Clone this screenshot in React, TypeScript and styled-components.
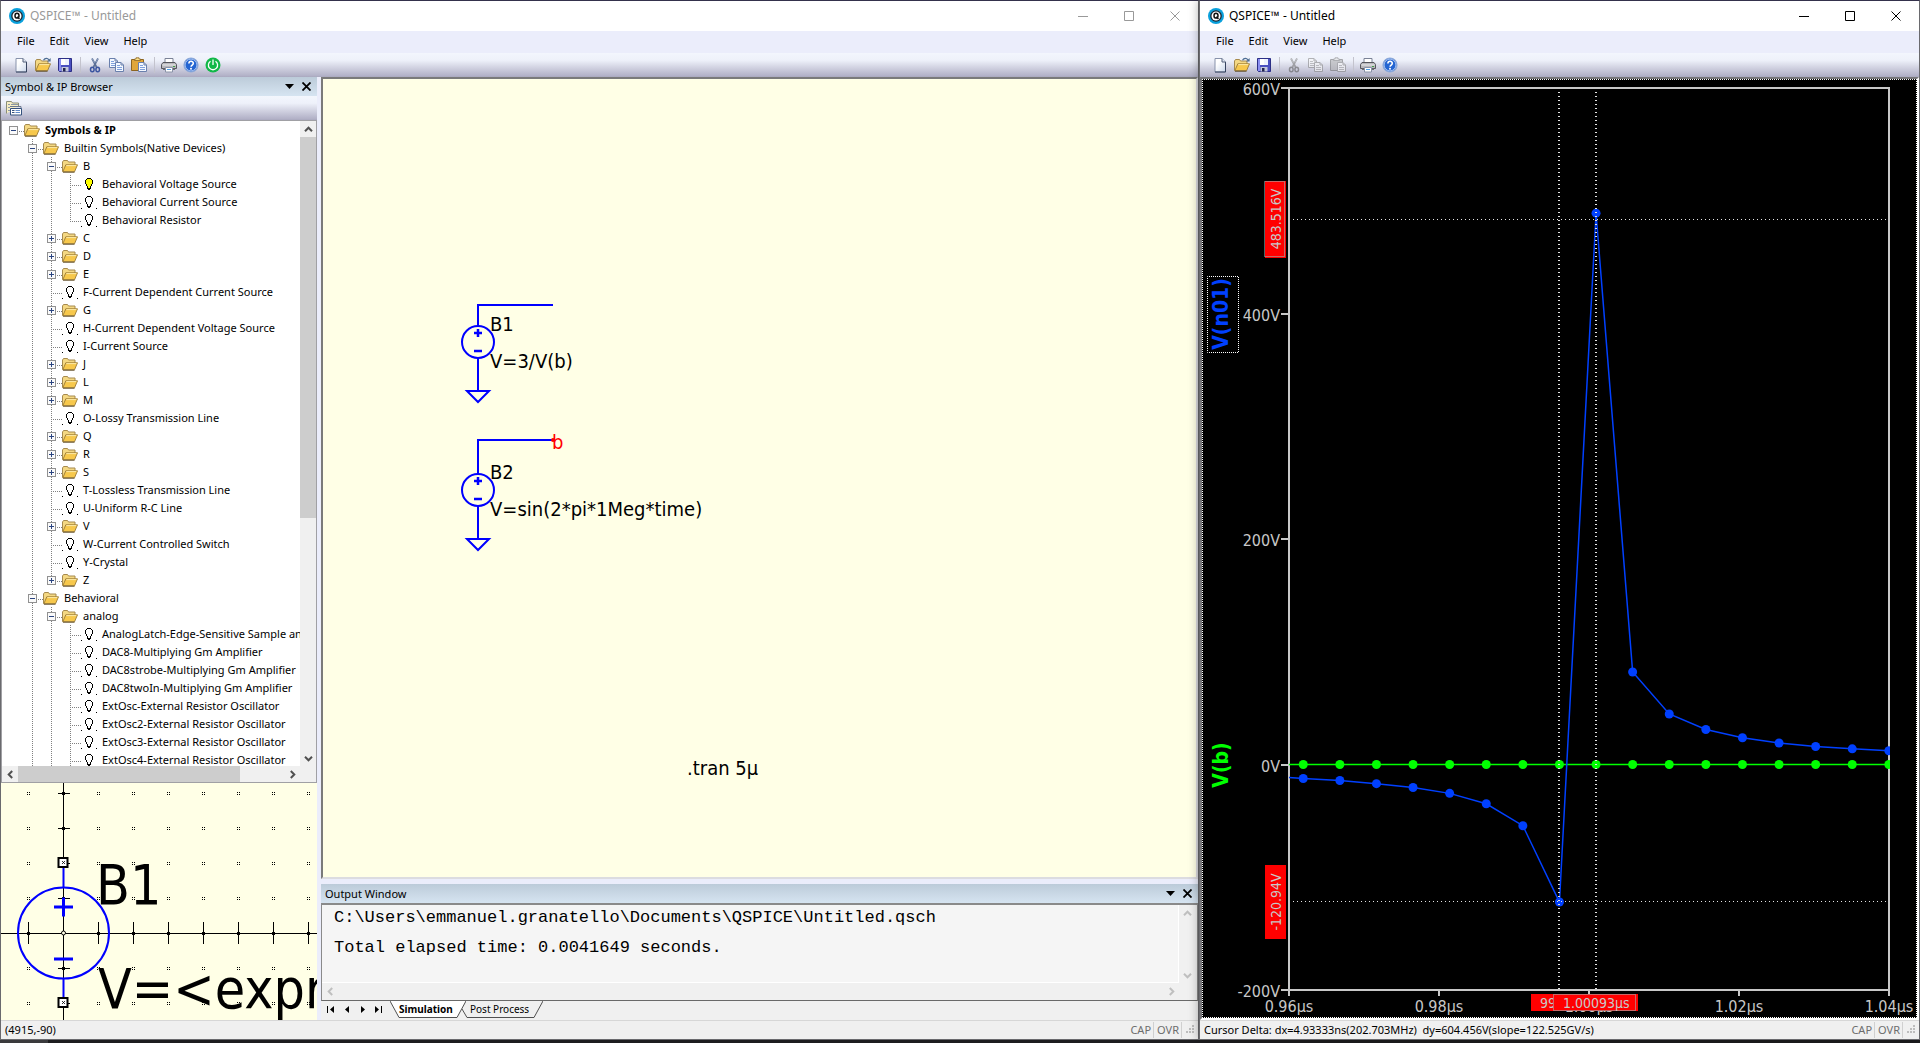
import React from "react";
import styled, { createGlobalStyle, css } from "styled-components";

const UI_FONT = '"Noto Sans", "Open Sans", sans-serif';
const DRAW_FONT = '"DejaVu Sans Condensed", "DejaVu Sans", sans-serif';
const PAPER = "#ffffe6";
const WIRE = "#0000ff";
const TRACE = "#0040ff";
const AXIS = "#c8c8c8";

const GlobalStyle = createGlobalStyle`
  * { box-sizing: border-box; }
  body {
    margin: 0;
    background: #1e1e20;
    font-family: ${UI_FONT};
    font-size: 11px;
    line-height: 16px;
    color: #000;
    overflow: hidden;
  }
  button { font: inherit; color: inherit; background: none; border: 0; padding: 0; margin: 0; }
  ul { list-style: none; margin: 0; padding: 0; }
  svg { display: block; flex: none; }
`;

/* ---------- window frame ---------- */

const Desktop = styled.div`
  display: flex;
  flex-direction: column;
  height: 100vh;
`;

const Windows = styled.main`
  flex: 1;
  min-height: 0;
  display: grid;
  grid-template-columns: 1199fr 721fr;
`;

const Taskbar = styled.footer`
  height: 3px;
  background: linear-gradient(90deg, #3a3a3c 0 48px, #1d1d1f 48px);
`;

const Window = styled.section<{ $active?: boolean }>`
  display: flex;
  flex-direction: column;
  min-width: 0;
  min-height: 0;
  background: #ebedfb;
  border: 1px solid #6a6a6e;
  border-top-color: #34314c;
  ${(p) =>
    p.$active &&
    css`
      position: relative;
      z-index: 1;
      box-shadow: 0 0 10px rgba(0, 0, 0, 0.35);
    `}
`;

const TitleBar = styled.header<{ $active?: boolean }>`
  display: flex;
  align-items: center;
  height: 30px;
  padding-left: 8px;
  background: #fff;
  color: ${(p) => (p.$active ? "#000" : "#999")};
`;

const Title = styled.h1`
  flex: 1;
  margin: 0 0 0 5px;
  font-size: 12px;
  font-weight: 400;
`;

const CaptionButton = styled.button`
  width: 46px;
  height: 30px;
  display: grid;
  place-items: center;
`;

const MenuBar = styled.nav`
  display: flex;
  gap: 15px;
  height: 22px;
  padding-left: 16px;
`;

const MenuItem = styled.button`
  height: 20px;
`;

const barFill = css`
  background: linear-gradient(180deg, #f3f6fd 0, #eef1fa 30%, #d2d3e2 60%, #b2b1c7 95%, #a9a8be 100%);
`;

const ToolBar = styled.div`
  ${barFill}
  display: flex;
  align-items: center;
  height: 24px;
  padding-left: 9px;
`;

const ToolButton = styled.button`
  width: 22px;
  height: 22px;
  display: grid;
  place-items: center;
  padding-bottom: 1px;
  &:disabled { filter: grayscale(1); opacity: 0.55; }
`;

const ToolSeparator = styled.span`
  width: 1px;
  height: 16px;
  margin: 0 3px 0 4px;
  background: #c3c3cd;
`;

const StatusBar = styled.footer`
  display: flex;
  align-items: center;
  height: 19px;
  padding: 0 3px 0 4px;
  background: #f0f0f0;
  border-top: 1px solid #d7d7d7;
`;

const StatusText = styled.span`
  flex: 1;
  white-space: pre;
`;

const StatusKey = styled.span`
  padding: 0 2px 0 3px;
  border-right: 1px solid #d0d0d0;
  color: #6d6d6d;
`;

/* ---------- docks ---------- */

const Body = styled.div`
  flex: 1;
  min-height: 0;
  display: grid;
  grid-template-columns: 316px minmax(0, 1fr);
  column-gap: 4px;
`;

const Dock = styled.aside`
  display: flex;
  flex-direction: column;
  min-height: 0;
`;

const DockHeader = styled.div`
  display: flex;
  align-items: center;
  gap: 8px;
  height: 19px;
  flex: none;
  padding: 0 6px 0 4px;
  background: linear-gradient(180deg, #bccbd9, #d6e4f1);
`;

const DockTitle = styled.h2`
  flex: 1;
  margin: 0;
  font-size: 11px;
  font-weight: 400;
`;

const DockTools = styled.div`
  ${barFill}
  display: flex;
  align-items: center;
  height: 24px;
  flex: none;
  padding-left: 2px;
`;

const TreeFrame = styled.div`
  flex: 1;
  min-height: 0;
  display: grid;
  grid-template-columns: minmax(0, 1fr) 16px;
  grid-template-rows: minmax(0, 1fr) 16px;
  border: 1px solid #a0a0a4;
  background: #f0f0f0;
`;

const TreeList = styled.ul`
  overflow: hidden;
  background: #fff;
`;

const TreeRow = styled.li`
  display: flex;
  align-items: center;
  height: 18px;
  white-space: nowrap;
`;

const dotsV = "repeating-linear-gradient(180deg, #808080 0 1px, transparent 1px 2px)";
const dotsH = "repeating-linear-gradient(90deg, #808080 0 1px, transparent 1px 2px)";

const Guide = styled.span<{ $line: boolean }>`
  flex: none;
  width: 19px;
  height: 18px;
  background: ${(p) => (p.$line ? `${dotsV} 11px 0 / 1px 18px no-repeat` : "none")};
`;

const Branch = styled.span<{ $stem: "none" | "half" | "full" }>`
  flex: none;
  display: grid;
  align-items: center;
  width: 22px;
  height: 18px;
  padding: 1px 0 0 7px;
  background: ${(p) => {
    const h = p.$stem === "none" ? "" : `, ${dotsV} 11px 0 / 1px ${p.$stem === "half" ? 10 : 18}px no-repeat`;
    return `${dotsH} 11px 10px / 11px 1px no-repeat${h}`;
  }};
`;

const Toggle = styled.button`
  display: grid;
  place-items: center;
  width: 9px;
  height: 9px;
  background: #fafafa;
  border: 1px solid #919191;
`;

const Label = styled.span<{ $bold: boolean }>`
  margin-left: 5px;
  font-weight: ${(p) => (p.$bold ? 700 : 400)};
`;

const ScrollBar = styled.div<{ $dir: "row" | "column" }>`
  display: flex;
  flex-direction: ${(p) => p.$dir};
  background: #f0f0f0;
`;

const ScrollButton = styled.button`
  flex: none;
  width: 16px;
  height: 16px;
  display: grid;
  place-items: center;
  color: #505050;
  &:disabled { color: #bfbfbf; }
`;

const Thumb = styled.span<{ $share: number }>`
  flex: ${(p) => p.$share} 0 0;
  background: #cdcdcd;
`;

const Track = styled.span<{ $share: number }>`
  flex: ${(p) => p.$share} 0 0;
`;

const Preview = styled.div`
  height: 237px;
  flex: none;
  overflow: hidden;
  background: ${PAPER};
`;

const Workspace = styled.div`
  display: flex;
  flex-direction: column;
  min-height: 0;
`;

const Sheet = styled.div`
  flex: 1;
  min-height: 0;
  margin-bottom: 5px;
  background: ${PAPER};
  border: 2px solid #dcdce0;
  border-top-color: #7a7a7a;
  border-left-color: #7a7a7a;
`;

const OutputFrame = styled.div`
  height: 98px;
  flex: none;
  display: grid;
  grid-template-columns: minmax(0, 1fr) 18px;
  grid-template-rows: minmax(0, 1fr) 17px;
  background: #f0f0f0;
  border: 1px solid #8a8a8a;
  border-bottom-color: #696969;
  border-top-width: 2px;
`;

const OutputText = styled.pre`
  margin: 0;
  padding: 5px 12px 0;
  overflow: hidden;
  background: #f5f5f5;
  border-right: 1px solid #fff;
  border-bottom: 1px solid #fff;
  font-family: "Liberation Mono", monospace;
  font-size: 17px;
  line-height: 15px;
`;

const TabStrip = styled.div`
  display: flex;
  height: 19px;
  flex: none;
  padding-left: 1px;
  background: #f0f0f0;
`;

const TabNav = styled.button`
  width: 16px;
  height: 17px;
  display: grid;
  place-items: center;
`;

const Tab = styled.button<{ $active?: boolean }>`
  position: relative;
  z-index: ${(p) => (p.$active ? 1 : 0)};
  width: ${(p) => (p.$active ? 76 : 81)}px;
  height: 17px;
  margin-left: ${(p) => (p.$active ? 4 : -4)}px;
  padding-left: ${(p) => (p.$active ? 9 : 8)}px;
  padding-bottom: 2px;
  text-align: left;
  font-size: 10px;
  font-weight: ${(p) => (p.$active ? 700 : 400)};
  white-space: nowrap;
`;

const TabShape = styled.svg`
  position: absolute;
  inset: 0;
  z-index: -1;
  width: 100%;
  height: 100%;
`;

const PlotFrame = styled.div`
  flex: 1;
  min-height: 0;
  display: flex;
  background: #000;
  border: 2px solid #fff;
  border-top-color: #77777a;
  border-left-color: #77777a;
`;

const PlotArea = styled.div`
  flex: 1;
  min-width: 0;
  border: 1px dotted #fff;
`;

/* ---------- icons ---------- */

const Icon = ({ children, size = 16 }: { children: React.ReactNode; size?: number }) => (
  <svg width={size} height={size} viewBox="0 0 16 16" fill="none" aria-hidden="true">
    {children}
  </svg>
);

const Logo = () => (
  <Icon>
    <circle cx="8" cy="8" r="8" fill="#0aa0dc" />
    <circle cx="8" cy="8" r="5.8" fill="#1c2430" />
    <circle cx="8" cy="8" r="4.500" fill="#fff" />
    <ellipse cx="8" cy="7.700" rx="2" ry="2.400" stroke="#111" strokeWidth="1.500" />
    <path d="M8.300 8.800 10.500 11" stroke="#111" strokeWidth="1.300" />
  </Icon>
);

const NewIcon = () => (
  <Icon>
    <defs>
      <linearGradient id="sheet" x1="0" y1="0" x2="1" y2="1">
        <stop offset="0.3" stopColor="#fff" />
        <stop offset="1" stopColor="#c9d6ea" />
      </linearGradient>
    </defs>
    <path d="M3 1.500h7l3.500 3.500v10H3z" fill="url(#sheet)" stroke="#8792ab" />
    <path d="M13.500 5v10H3" stroke="#36435e" />
    <path d="M10 1.500V5h3.500" fill="#dfe6f2" stroke="#55607a" />
  </Icon>
);

const FolderShape = () => (
  <>
    <path d="M.5 13.500V4l1-1.500h4l1 1.500h6.500v3" fill="#f4d883" stroke="#a68a4e" />
    <path d="M.8 13.800 3.800 6.800h11.700l-3 7z" fill="#f7c84c" stroke="#9a7a35" strokeWidth=".9" />
    <path d="M4.300 7.600h10" stroke="#fdeaa8" />
    <path d="M1 14.200h11.500" stroke="#4b3a17" strokeWidth=".8" />
  </>
);

const OpenIcon = () => (
  <Icon>
    <FolderShape />
    <path d="M8.500 3.200C10 .8 12.500.8 14 2.800" stroke="#4d6d93" strokeWidth="1.200" />
    <path d="M15.600 1v3.600H12z" fill="#4d6d93" />
  </Icon>
);

const SaveIcon = () => (
  <Icon>
    <path d="M1.500 1.500h13v13h-12l-1-1z" fill="#4a4fc0" stroke="#2c2f86" />
    <path d="M2 2h2v12H2z" fill="#8a8ef0" />
    <path d="M4 2h8v6H4z" fill="#eef2ff" />
    <path d="M4 2h4v6H4z" fill="#fff" />
    <path d="M4.500 10h7v4.500h-7z" fill="#c4c8dc" />
    <path d="M6 11h2.500v3.500H6z" fill="#22254e" />
  </Icon>
);

const CutIcon = () => (
  <Icon>
    <path d="M5 1.500 9.500 10M11 1.500 6.500 10" stroke="#5b6f96" strokeWidth="1.700" />
    <path d="M5 1.500 7.500 6M11 1.500 9 5.500" stroke="#9aabca" strokeWidth=".7" />
    <ellipse cx="5.300" cy="12.500" rx="1.800" ry="2.300" stroke="#3a54a0" strokeWidth="1.500" />
    <ellipse cx="10.700" cy="12.500" rx="1.800" ry="2.300" stroke="#3a54a0" strokeWidth="1.500" />
  </Icon>
);

const Page = ({ x, y }: { x: number; y: number }) => (
  <g transform={`translate(${x} ${y})`}>
    <path d="M.5.5h5.500l2.500 2.500v6.500h-8z" fill="#f4f8ff" stroke="#6a80ad" />
    <path d="M2 3.500h3M2 5.500h5M2 7.500h5" stroke="#7fa0dc" />
    <path d="M6 .5V3h2.500" stroke="#6a80ad" />
  </g>
);

const CopyIcon = () => (
  <Icon>
    <Page x={0} y={1} />
    <Page x={6} y={5} />
  </Icon>
);

const PasteIcon = () => (
  <Icon>
    <path d="M.5 2.500h12v11H.5z" fill="#e0a63a" stroke="#8c6420" />
    <path d="M3.500 3.500h6v-1.500h-1.500V.8h-3V2H3.500z" fill="#fbe08c" stroke="#8c6420" strokeWidth=".8" />
    <Page x={7} y={5} />
  </Icon>
);

const PrintIcon = () => (
  <Icon>
    <path d="M4 6V1.500h8V6" fill="#fff" stroke="#7a8296" />
    <path d="M2 5.500h12l1.500 2v4h-15v-4z" fill="#b9b9bd" stroke="#55565c" />
    <path d="M1.500 8h13" stroke="#eeeeee" />
    <path d="M2 11.500h12V13H2z" fill="#6c6c72" />
    <path d="M4.500 10.500h7v4.500h-7z" fill="#fff" stroke="#8a93a8" />
    <path d="M6 12.500h4" stroke="#4da0e8" />
    <path d="M12 9.500h2" stroke="#3f9b45" />
  </Icon>
);

const HelpIcon = () => (
  <Icon>
    <circle cx="8" cy="8" r="7" fill="#2465d2" stroke="#8ea9d8" strokeWidth="1.200" />
    <circle cx="8" cy="8" r="5.900" stroke="#dce8fb" strokeWidth=".7" />
    <path d="M5.900 6.400C5.900 3.600 10.300 3.700 10.300 6.200c0 1.800-2.100 1.800-2.200 3.500" stroke="#fff" strokeWidth="1.600" />
    <circle cx="8" cy="11.700" r="1" fill="#fff" />
  </Icon>
);

const PowerIcon = () => (
  <Icon>
    <circle cx="8" cy="8" r="7.500" fill="#12b848" />
    <path d="M5.500 4.300a4.600 4.600 0 1 0 5 0M8 2.500V8" stroke="#fff" strokeWidth="1.300" />
  </Icon>
);

const PropertiesIcon = () => (
  <Icon>
    <path d="M.5 13.500v-12h5l1 1.500h6v3" fill="#f6edc4" stroke="#8b8f78" />
    <path d="M2 4.500h2M2 7.500h2M2 10.500h2M5 4.500h7" stroke="#8c98a8" />
    <path d="M4 6.500h11v3" stroke="#6d7a90" />
    <path d="M4.500 8.500h11v6.500h-11z" fill="#fff" stroke="#35527e" />
    <path d="M6 10.500h2.500M6 12.500h2.500" stroke="#35527e" />
    <path d="M9.500 10.500h4.500M9.500 12.500h4.500" stroke="#5f8ac8" />
  </Icon>
);

const FolderIcon = () => (
  <Icon>
    <FolderShape />
  </Icon>
);

const BulbIcon = ({ lit }: { lit?: boolean }) => (
  <Icon>
    <g shapeRendering="crispEdges">
      <path d="M6 3h4v1h1v4h-1v2h-1v3H7v-3H6V8H5V4h1z" fill={lit ? "#ffff00" : "#fff"} />
      <path
        d="M6 2h4v1H6zM5 3h1v1H5zM10 3h1v1h-1zM4 4h1v4H4zM11 4h1v4h-1zM5 8h1v2H5zM10 8h1v2h-1zM6 10h1v3H6zM9 10h1v3H9zM7 12h2v2H7z"
        fill="#000"
      />
      {!lit && <path d="M0 14h1v1H0zM15 14h1v1h-1z" fill="#000" />}
    </g>
  </Icon>
);

const Chevron = ({ turn }: { turn: number }) => (
  <svg width="9" height="9" viewBox="0 0 9 9" fill="none" aria-hidden="true">
    <path d="M1 6.200 4.500 2.700 8 6.200" stroke="currentColor" strokeWidth="2" transform={`rotate(${turn} 4.500 4.500)`} />
  </svg>
);

const CollapseArrow = () => (
  <svg width="9" height="5" viewBox="0 0 9 5" aria-hidden="true">
    <path d="M0 0h9L4.500 5z" />
  </svg>
);

const CrossIcon = ({ size, weight }: { size: number; weight: number }) => (
  <svg width={size} height={size} viewBox="0 0 10 10" aria-hidden="true">
    <path d="M.5.5l9 9M9.500.5l-9 9" stroke="currentColor" strokeWidth={weight} />
  </svg>
);

const Grip = () => (
  <svg width="13" height="12" fill="#bdbdbd" aria-hidden="true">
    <path d="M10 1h2v2h-2zM7 4h2v2H7zM10 4h2v2h-2zM4 7h2v2H4zM7 7h2v2H7zM10 7h2v2h-2z" />
  </svg>
);

/* ---------- window pieces ---------- */

const Caption = ({ active }: { active?: boolean }) => (
  <TitleBar $active={active}>
    <Logo />
    <Title>QSPICE™ - Untitled</Title>
    <CaptionButton aria-label="Minimize">
      <svg width="10" height="10"><path d="M0 5.500h10" stroke="currentColor" /></svg>
    </CaptionButton>
    <CaptionButton aria-label="Maximize">
      <svg width="10" height="10"><path d="M.5.5h9v9h-9z" fill="none" stroke="currentColor" /></svg>
    </CaptionButton>
    <CaptionButton aria-label="Close">
      <CrossIcon size={10} weight={1} />
    </CaptionButton>
  </TitleBar>
);

const Menu = () => (
  <MenuBar>
    {["File", "Edit", "View", "Help"].map((m) => (
      <MenuItem key={m}>{m}</MenuItem>
    ))}
  </MenuBar>
);

const Tools = ({ editing }: { editing: boolean }) => (
  <ToolBar role="toolbar">
    <ToolButton aria-label="New"><NewIcon /></ToolButton>
    <ToolButton aria-label="Open"><OpenIcon /></ToolButton>
    <ToolButton aria-label="Save"><SaveIcon /></ToolButton>
    <ToolSeparator />
    <ToolButton aria-label="Cut" disabled={!editing}><CutIcon /></ToolButton>
    <ToolButton aria-label="Copy" disabled={!editing}><CopyIcon /></ToolButton>
    <ToolButton aria-label="Paste" disabled={!editing}><PasteIcon /></ToolButton>
    <ToolSeparator />
    <ToolButton aria-label="Print"><PrintIcon /></ToolButton>
    <ToolButton aria-label="About"><HelpIcon /></ToolButton>
    {editing && <ToolButton aria-label="Run"><PowerIcon /></ToolButton>}
  </ToolBar>
);

const Status = ({ text }: { text: string }) => (
  <StatusBar>
    <StatusText>{text}</StatusText>
    <StatusKey>CAP</StatusKey>
    <StatusKey>OVR</StatusKey>
    <Grip />
  </StatusBar>
);

const DockBar = ({ title }: { title: string }) => (
  <DockHeader>
    <DockTitle>{title}</DockTitle>
    <button aria-label={`${title} menu`}><CollapseArrow /></button>
    <button aria-label={`Close ${title}`}><CrossIcon size={9} weight={2} /></button>
  </DockHeader>
);

/* ---------- symbol tree ---------- */

type Node = { name: string; open?: boolean; folder?: boolean; lit?: boolean; more?: boolean; items?: Node[] };

const leaf = (name: string): Node => ({ name });
const closed = (name: string): Node => ({ name, folder: true });

const library: Node = {
  name: "Symbols & IP",
  folder: true,
  open: true,
  items: [
    {
      name: "Builtin Symbols(Native Devices)",
      folder: true,
      open: true,
      items: [
        {
          name: "B",
          folder: true,
          open: true,
          items: [
            { name: "Behavioral Voltage Source", lit: true },
            leaf("Behavioral Current Source"),
            leaf("Behavioral Resistor"),
          ],
        },
        closed("C"),
        closed("D"),
        closed("E"),
        leaf("F-Current Dependent Current Source"),
        closed("G"),
        leaf("H-Current Dependent Voltage Source"),
        leaf("I-Current Source"),
        closed("J"),
        closed("L"),
        closed("M"),
        leaf("O-Lossy Transmission Line"),
        closed("Q"),
        closed("R"),
        closed("S"),
        leaf("T-Lossless Transmission Line"),
        leaf("U-Uniform R-C Line"),
        closed("V"),
        leaf("W-Current Controlled Switch"),
        leaf("Y-Crystal"),
        closed("Z"),
      ],
    },
    {
      name: "Behavioral",
      folder: true,
      open: true,
      more: true,
      items: [
        {
          name: "analog",
          folder: true,
          open: true,
          more: true,
          items: [
            leaf("AnalogLatch-Edge-Sensitive Sample and Hold"),
            leaf("DAC8-Multiplying Gm Amplifier"),
            leaf("DAC8strobe-Multiplying Gm Amplifier"),
            leaf("DAC8twoIn-Multiplying Gm Amplifier"),
            leaf("ExtOsc-External Resistor Oscillator"),
            leaf("ExtOsc2-External Resistor Oscillator"),
            leaf("ExtOsc3-External Resistor Oscillator"),
            { name: "ExtOsc4-External Resistor Oscillator", more: true },
          ],
        },
      ],
    },
  ],
};

const renderNode = (node: Node, guides: boolean[], last: boolean): React.ReactNode[] => {
  const root = node === library;
  const ends = last && !node.more;
  const row = (
    <TreeRow key={guides.length + node.name}>
      {guides.map((line, i) => (
        <Guide key={i} $line={line} />
      ))}
      <Branch $stem={root ? "none" : ends ? "half" : "full"}>
        {node.folder && (
          <Toggle aria-label={`${node.open ? "Collapse" : "Expand"} ${node.name}`}>
            <svg width="7" height="7">
              <path d={node.open ? "M1 3.500h5" : "M1 3.500h5M3.500 1v5"} stroke="#2a4480" />
            </svg>
          </Toggle>
        )}
      </Branch>
      {node.folder ? <FolderIcon /> : <BulbIcon lit={node.lit} />}
      <Label $bold={root}>{node.name}</Label>
    </TreeRow>
  );
  const items = node.items ?? [];
  const below = [...guides, !root && !ends];
  return [row, ...items.flatMap((n, i) => renderNode(n, below, i === items.length - 1))];
};

/* ---------- schematic ---------- */

const Source = (p: { x: number; y: number; lead: number; name: string; value: string }) => (
  <g transform={`translate(${p.x} ${p.y})`}>
    <g fill="none" stroke={WIRE} strokeWidth="2">
      <path d={`M0 -16V${-p.lead}H75`} />
      <circle r="16" />
      <path d="M0 16V49M-11 49H11L0 60Z" />
      <path d="M-4 -9H4M0 -13V-5M-4 9H4" strokeWidth="2.500" />
    </g>
    <text x="12" y="-11">{p.name}</text>
    <text x="12" y="26">{p.value}</text>
  </g>
);

const Schematic = () => (
  <svg width="100%" height="100%" fontFamily={DRAW_FONT} fontSize="20" role="img" aria-label="Schematic">
    <Source x={155} y={263} lead={37} name="B1" value="V=3/V(b)" />
    <Source x={155} y={411} lead={50} name="B2" value="V=sin(2*pi*1Meg*time)" />
    <circle cx="230" cy="361" r="2" fill="#ff0000" />
    <text x="229" y="370" fill="#ff0000">b</text>
    <text x="364" y="696">.tran 5µ</text>
  </svg>
);

const SymbolPreview = () => {
  const step = 35;
  const cx = 62;
  const cy = 150;
  const cols = [-1, 1, 2, 3, 4, 5, 6, 7];
  const rows = [-4, -3, -2, -1, 1, 2];
  return (
    <svg width="100%" height="100%" fontFamily={DRAW_FONT} fontSize="55" role="img" aria-label="Symbol preview">
      <path d={`M0 ${cy + 0.5}H400M${cx + 0.5} 0V240`} stroke="#000" />
      {cols.map((c) => (
        <g key={c}>
          <path d={`M${cx + c * step + 0.5} ${cy - 11}v22`} stroke="#000" />
          <path d={`M${cx + c * step - 1} ${cy - 1}h3v3h-3z`} />
          {rows.map((r) => (
            <path
              key={r}
              transform={`translate(${cx + c * step - 1} ${cy + r * step - 1})`}
              d="M0 0h1v1H0zM2 0h1v1H2zM0 2h1v1H0zM2 2h1v1H2z"
            />
          ))}
        </g>
      ))}
      {rows.map((r) => (
        <g key={r}>
          <path d={`M${cx - 5} ${cy + r * step + 0.5}h12`} stroke="#000" />
          <path d={`M${cx - 1} ${cy + r * step - 1}h3v3h-3z`} />
        </g>
      ))}
      <circle cx="62.5" cy="150" r="2" fill={PAPER} stroke="#000" />
      <g fill="none" stroke={WIRE} strokeWidth="2">
        <circle cx="62.500" cy="150" r="45.500" />
        <path d="M62.500 84V105M62.500 195V215" />
        <path d="M53 124H72M62.500 114.500V133.500M53 176H72" strokeWidth="3" />
      </g>
      {[80, 220].map((y) => (
        <g key={y}>
          <path d={`M57.500 ${y - 5}h9v9h-9z`} fill="#fff" stroke="#000" strokeWidth="2" />
          <path d={`M61 ${y - 2}l3 3M64 ${y - 2}l-3 3`} stroke="#000" strokeWidth=".8" />
        </g>
      ))}
      <text x="95" y="121">B1</text>
      <text x="97" y="225">V=&lt;expr&gt;</text>
    </svg>
  );
};

/* ---------- waveform plot ---------- */

const PLOT = { left: 86, right: 686, top: 8, bottom: 910 };
const xAt = (us: number) => PLOT.left + (us - 0.96) * 7500;
const yAt = (v: number) => PLOT.bottom - ((v + 200) / 800) * (PLOT.bottom - PLOT.top);

const vTicks = [600, 400, 200, 0, -200];
const tTicks = [0.96, 0.98, 1.0, 1.02, 1.04];
const n01 = [-12.4, -14.2, -17, -20.4, -25.6, -34.8, -54.3, -122, 489, 82, 44.8, 31, 23.7, 19.1, 16, 13.9, 12.2];
const samples = n01.map((v, i) => ({ x: xAt(0.9619 + i * 0.00488), y: yAt(v) }));
const zeroY = yAt(0);
const cursorX = [PLOT.left + 270, PLOT.left + 307];
const cursorY = [yAt(483.516), yAt(-121.2)];

const Plot = () => (
  <svg
    width="100%"
    height="100%"
    viewBox="0 0 713 937"
    preserveAspectRatio="xMinYMin meet"
    fontFamily={DRAW_FONT}
    fontSize="16"
    fill={AXIS}
    role="img"
    aria-label="Waveforms"
  >
    <clipPath id="plotArea">
      <rect x={PLOT.left - 1} y={PLOT.top} width={PLOT.right - PLOT.left + 2} height={PLOT.bottom - PLOT.top} />
    </clipPath>
    <rect
      x={PLOT.left}
      y={PLOT.top}
      width={PLOT.right - PLOT.left}
      height={PLOT.bottom - PLOT.top}
      fill="none"
      stroke={AXIS}
      strokeWidth="2"
    />
    {vTicks.map((v) => (
      <g key={v}>
        <path d={`M${PLOT.left - 8} ${Math.round(yAt(v))}h8`} stroke={AXIS} strokeWidth="2" />
        <text x={PLOT.left - 9} y={Math.round(yAt(v)) + 7} textAnchor="end">{v}V</text>
      </g>
    ))}
    {tTicks.map((t) => (
      <g key={t}>
        <path d={`M${Math.round(xAt(t))} ${PLOT.bottom}v6`} stroke={AXIS} strokeWidth="2" />
        <text x={Math.round(xAt(t))} y={PLOT.bottom + 22} textAnchor="middle">{t.toFixed(2)}µs</text>
      </g>
    ))}

    <g clipPath="url(#plotArea)">
      <path d={`M${PLOT.left} ${zeroY}H${PLOT.right}`} stroke="#00ff00" strokeWidth="1.500" />
      {samples.map((s) => (
        <circle key={s.x} cx={s.x} cy={zeroY} r="4.500" fill="#00ff00" />
      ))}
      <path
        d={`M${PLOT.left} ${yAt(-11.5)}` + samples.map((s) => `L${s.x} ${s.y}`).join("")}
        fill="none"
        stroke={TRACE}
        strokeWidth="1.500"
      />
      {samples.map((s) => (
        <circle key={s.x} cx={s.x} cy={s.y} r="4.500" fill={TRACE} />
      ))}
    </g>

    <g fill="none" stroke="#e4e4e4" strokeDasharray="1 3">
      {cursorX.map((x) => (
        <path key={x} d={`M${x} ${PLOT.top + 4}V${PLOT.bottom}`} strokeWidth="2" />
      ))}
      {cursorY.map((y) => (
        <path key={y} d={`M${PLOT.left + 4} ${Math.round(y) + 0.5}H${PLOT.right}`} />
      ))}
    </g>

    <g fontSize="14">
      <rect x="62" y="101" width="21" height="77" fill="#ff0000" />
      <rect x="61.5" y="101.5" width="20" height="75" fill="none" stroke="#8fd0d0" strokeDasharray="1 1" />
      <text transform="translate(78 139) rotate(-90)" textAnchor="middle">483.516V</text>
      <rect x="62" y="785" width="21" height="74" fill="#ff0000" />
      <text transform="translate(78 822) rotate(-90)" textAnchor="middle">-120.94V</text>
      <rect x="328" y="914" width="60" height="17" fill="#ff0000" />
      <text x="337" y="928">99</text>
      <rect x="350" y="914" width="85" height="17" fill="#ff0000" />
      <rect x="350.5" y="914.5" width="82" height="16" fill="none" stroke="#8fd0d0" strokeDasharray="1 1" />
      <text x="360" y="928">1.00093µs</text>
    </g>

    <g fontSize="21" fontWeight="700" textAnchor="middle">
      <rect
        x="4.5"
        y="196.5"
        width="31"
        height="76"
        fill="none"
        stroke="#fff"
        strokeDasharray="1 1"
        strokeDashoffset=".5"
      />
      <text transform="translate(25 234) rotate(-90)" fill={TRACE}>V(n01)</text>
      <text transform="translate(25 685) rotate(-90)" fill="#00ff00">V(b)</text>
    </g>
  </svg>
);

/* ---------- page ---------- */

const navShapes = [
  "M0 0h1v7H0zM7 0v7L3 3.500z",
  "M6 0v7L2 3.500z",
  "M2 0v7l4-3.500z",
  "M0 0v7l4-3.500zM6 0h1v7H6z",
];

const SchematicWindow = () => (
  <Window>
    <Caption />
    <Menu />
    <Tools editing />
    <Body>
      <Dock>
        <DockBar title="Symbol & IP Browser" />
        <DockTools>
          <ToolButton aria-label="Properties"><PropertiesIcon /></ToolButton>
        </DockTools>
        <TreeFrame>
          <TreeList>{renderNode(library, [], true)}</TreeList>
          <ScrollBar $dir="column">
            <ScrollButton aria-label="Scroll up"><Chevron turn={0} /></ScrollButton>
            <Thumb $share={381} />
            <Track $share={232} />
            <ScrollButton aria-label="Scroll down"><Chevron turn={180} /></ScrollButton>
          </ScrollBar>
          <ScrollBar $dir="row">
            <ScrollButton aria-label="Scroll left"><Chevron turn={-90} /></ScrollButton>
            <Thumb $share={222} />
            <Track $share={44} />
            <ScrollButton aria-label="Scroll right"><Chevron turn={90} /></ScrollButton>
          </ScrollBar>
        </TreeFrame>
        <Preview>
          <SymbolPreview />
        </Preview>
      </Dock>
      <Workspace>
        <Sheet>
          <Schematic />
        </Sheet>
        <DockBar title="Output Window" />
        <OutputFrame>
          <OutputText>{"C:\\Users\\emmanuel.granatello\\Documents\\QSPICE\\Untitled.qsch\n\nTotal elapsed time: 0.0041649 seconds."}</OutputText>
          <ScrollBar $dir="column">
            <ScrollButton disabled aria-label="Scroll output up"><Chevron turn={0} /></ScrollButton>
            <Track $share={1} />
            <ScrollButton disabled aria-label="Scroll output down"><Chevron turn={180} /></ScrollButton>
          </ScrollBar>
          <ScrollBar $dir="row">
            <ScrollButton disabled aria-label="Scroll output left"><Chevron turn={-90} /></ScrollButton>
            <Track $share={1} />
            <ScrollButton disabled aria-label="Scroll output right"><Chevron turn={90} /></ScrollButton>
          </ScrollBar>
        </OutputFrame>
        <TabStrip>
          {navShapes.map((d, i) => (
            <TabNav key={d} aria-label={["First tab", "Previous tab", "Next tab", "Last tab"][i]}>
              <svg width="7" height="7"><path d={d} /></svg>
            </TabNav>
          ))}
          <Tab $active>
            <TabShape viewBox="0 0 76 17" preserveAspectRatio="none">
              <path d="M0 0 9 16.500H67L76 0" fill="#fff" stroke="#505050" />
            </TabShape>
            Simulation
          </Tab>
          <Tab>
            <TabShape viewBox="0 0 81 17" preserveAspectRatio="none">
              <path d="M0 8 5 16.500H72L81 0" fill="none" stroke="#505050" />
            </TabShape>
            Post Process
          </Tab>
        </TabStrip>
      </Workspace>
    </Body>
    <Status text="(4915,-90)" />
  </Window>
);

const WaveformWindow = () => (
  <Window $active>
    <Caption active />
    <Menu />
    <Tools editing={false} />
    <PlotFrame>
      <PlotArea>
        <Plot />
      </PlotArea>
    </PlotFrame>
    <Status text="Cursor Delta: dx=4.93333ns(202.703MHz)  dy=604.456V(slope=122.525GV/s)" />
  </Window>
);

export default function App() {
  return (
    <>
      <GlobalStyle />
      <Desktop>
        <Windows>
          <SchematicWindow />
          <WaveformWindow />
        </Windows>
        <Taskbar />
      </Desktop>
    </>
  );
}
